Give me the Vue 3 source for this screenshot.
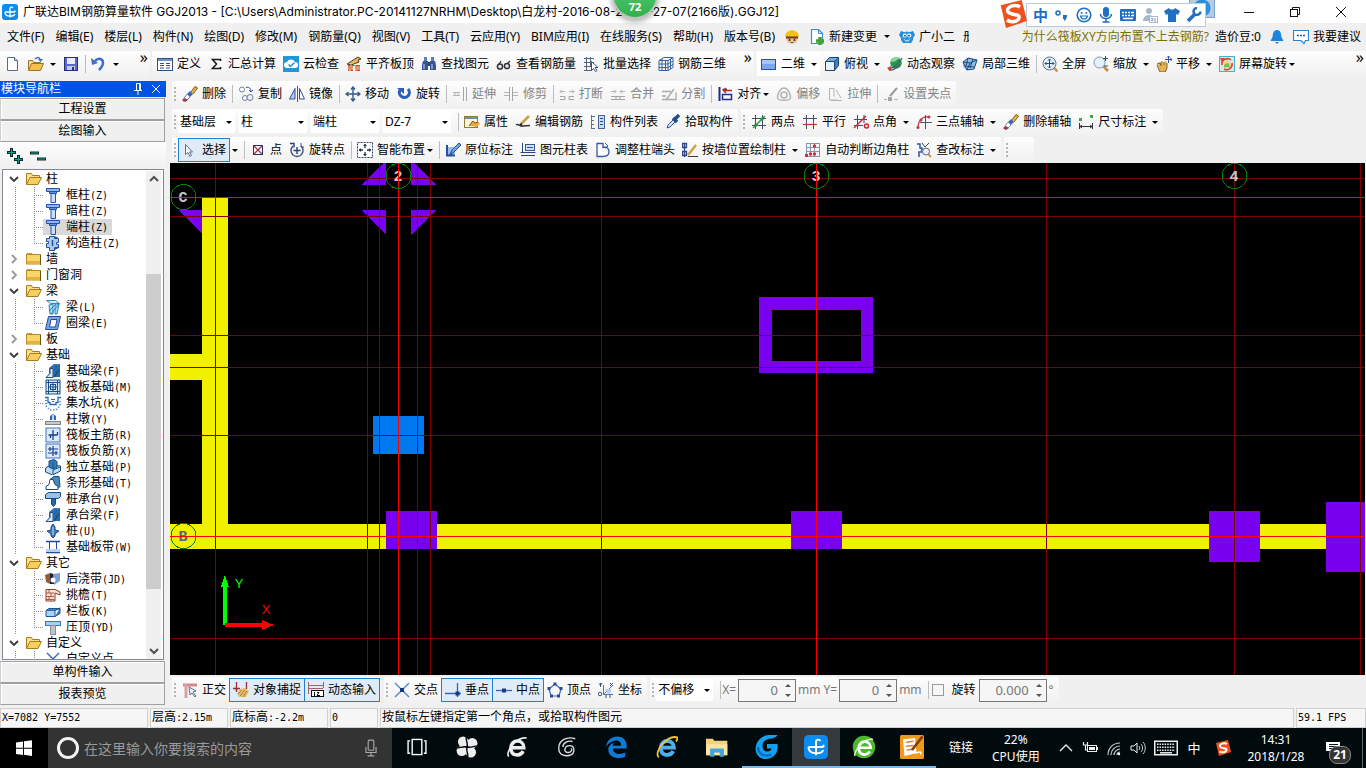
<script setup>
import { h, ref } from 'vue'

const s = (d, c = '#24448c', w = 1, f = 'none') => `<path d="${d}" stroke="${c}" stroke-width="${w}" fill="${f}"/>`
const f = (d, c) => `<path d="${d}" fill="${c}"/>`
const r = (x, y, w, ht, c, st = 'none') => `<rect x="${x}" y="${y}" width="${w}" height="${ht}" fill="${c}" stroke="${st}"/>`
const o = (x, y, rad, c, st = 'none', w = 1) => `<circle cx="${x}" cy="${y}" r="${rad}" fill="${c}" stroke="${st}" stroke-width="${w}"/>`

const grey = '#b4b4b4'
const brush = f('M8 7L13 0l3 2-5 6z', '#e8b44c') + s('M8 7L13 .5 15.500 2 11 8', '#8a5a1c') + f('M5 8l3-3 3 3-3 3z', '#3d67b8') + f('M5 8l3 3-3 3-4 1 1-3z', '#fff') + s('M5 8l3 3-3 3-4 1 1-3z', '#7a8cb0') + f('M0 14l3-2 3 2-3 2z', '#a03a4a')
const magnifier = s('M10 10l5 5', '#c98a3c', 2.5) + o(6.5, 6.5, 5.5, '#e4f0fb', '#8193ad')
const folderShut = f('M1 2h5l1 2H1z', '#c79a34') + r(.5, 3.500, 14, 9.500, '#f8d568', '#b88a2a') + r(1, 10, 13, 3, '#e5b03c') + r(14, 4, 1, 10, '#6e5218')
const folderOpen = s('M.5 13V2.500h5l1 2h7V7', '#a57c22', 1, '#fbe08a') + s('M.5 13.500L4 6.500h11.500L12 13.500z', '#a57c22', 1, '#f8cf5c')
const footing = f('M1 15l3-4V5l5-4h3v13z', '#2f6fb4') + s('M1 14.500l4-4v-5h3v9z', '#1d4f86', 1, '#dbeafc') + f('M8 6l5-5h2v13H8z', '#246aa8') + s('M9 14l5-7', '#0f3d70')
const column = s('M1.500 1.500h13v3h-13z', '#2a50a4', 1, '#8bb8ee') + s('M4.500 4.500h7v2h-7z', '#2a50a4', 1, '#5e92dc') + s('M6 6.500h4.500v9H6z', '#2a50a4', 1, '#c6defa')

const icons = {
  app: `<rect width="16" height="16" rx="3" fill="#0b8cf0"/>` + s('M8 13.500V4.500C8 3 10 2.500 11 4M3 8h10M13 8v-1.500M3 8c0 3 2 4.200 5 4.200s4.500-1 4.800-2.200', '#fff', 1.3),
  newFile: s('M2.500 1.500h7l3 3v10h-10z', '#5a6c84', 1, '#fff') + s('M9.500 1.500v3h3', '#5a6c84', 1, '#cfdcee'),
  open: s('M.5 13.500V4.500h4l1 2h7V8', '#9a7428', 1, '#f9dc86') + s('M.5 14.500L3.500 7.500h12L12.500 14.500z', '#9a7428', 1, '#f4c04e') + s('M7 3c2-2 4-2 5 0', '#3f6fb4', 1.3) + f('M10 3h5l-2.500 3z', '#3f6fb4'),
  save: r(1.5, 1.500, 13, 13, '#5a6ad0', '#27307c') + r(4, 2, 8, 6, '#e6ecfa') + r(4, 10, 8, 4, '#c2cdec') + r(9, 11, 2, 3, '#2b3482'),
  undo: s('M4 5c4-4 8-2 8 2 0 3-2 5-4 7', '#3f6ec6', 2.5) + f('M0 2l1 7 6-2z', '#3f6ec6'),
  define: r(0.5, 2.500, 15, 12, '#fff', '#2f4f84') + r(1, 3, 14, 2, '#6e90c4') + s('M3 7.500h4M3 9.500h4M3 12h4M9 7.500h4M9 9.500h4M9 12h4', '#2f4f84'),
  sigma: s('M12.500 5V3.500H4.500L8.500 8l-4 4.500h8V11', '#1a1a1a', 1.6),
  cloudCheck: r(0, 0, 16, 16, '#1f97d8') + f('M4 12a3 3 0 0 1 0-6 4.500 4.500 0 0 1 8 0 3 3 0 0 1 0 6z', '#fff') + s('M5.500 8.500l2 2 4-4', '#1f97d8', 1.5),
  slab: f('M2 8L12 1l3 2-3 1 2 2-8 2z', '#e8b860') + s('M1 8L12 1l3 2-3 1 1 2-8 3z', '#4a3414') + r(2, 9, 12, 6, '#c4532c') + s('M2 11h12M2 13h12M5 9v2M9 9v2M12 11v2M7 11v2M4 13v2M10 13v2', '#f0c49c') + s('M8 10v6', '#fff', 2),
  binoculars: f('M2 5h5v9H1V9zM9 5h5l1 4v5H9z', '#35568e') + r(3, 1, 3, 4, '#5e80ba') + r(10, 1, 3, 4, '#5e80ba') + r(7, 6, 2, 4, '#223f72') + s('M3 8v5M11 8v5', '#c6d7f0'),
  glasses: s('M2 10L5 5M10 9l4-4', '#333', 1.3) + o(4, 10.5, 2.6, '#dfe6ee', '#333', 1.5) + o(11, 10, 2.6, '#dfe6ee', '#333', 1.5),
  batch: s('M1 2.500h10M1 6.500h10M1 10.500h7M1 14.500h8M3.500 1v14M7.500 1v9', '#56657c') + s('M8.500 5.500v9l2-2 2 3 1.500-1-2-3h3z', '#3d567e', 1, '#fff'),
  rebar3d: s('M1 4.500l5-3h9v10l-5 3H1zM1 4.500h9v10M10 4.500l5-3M4 3v11M7.500 4v11M1 8h9l5-3M1 11.500h9l5-3M12.500 3v10', '#3a6296'),
  plane: r(0.5, 3.500, 14, 10, '#7ea6ec', '#2650b0') + r(1, 4, 13, 4, '#a8c5f7'),
  cube: s('M1.500 5.500l4-4h9v8l-4 5h-9z', '#1e466e', 1, '#3f82b8') + s('M1.500 5.500h9v9h-9z', '#1e466e', 1, '#e6f1fb') + s('M10.500 5.500l4-4', '#1e466e') + f('M2 5l4-3h8l-4 3z', '#73aadb'),
  orbit: o(9, 7, 5.8, '#2b9a4e') + f('M4 6c1-5 7-6 10-4-4 0-4 4-10 4z', '#8cd9a0') + s('M1 13c4 0 11-5 14-11M2 14c3 1 8-2 11-6', '#44586e', 1.2) + f('M0 12l4-2v5z', '#d04038'),
  local3d: f('M1 6l5-4 9 2-3 9-7 1-4-3z', '#8fc0e4') + s('M1 6l7 1 7-3M8 7l-3 7M1 6l4 8M6 2l-2 8M11 3l-3 9M3 10l9 1M1 6l5-4 9 2-3 9-7 1', '#1d4b7a'),
  fit: s('M11.500 11.500l4 4', '#cf9448', 2.5) + o(7.5, 7.5, 6.5, '#e8f2fc', '#5a6d88') + s('M7.500 3v9M3 7.500h9M6 4.500l1.500-1.500L9 4.500M6 10.500l1.500 1.500L9 10.500M4.500 6L3 7.500 4.500 9M10.500 6L12 7.500 10.500 9', '#1d4c9a'),
  zoom: magnifier + s('M12.500 0v5M10 2.500h5M11 10h4', '#2b4e86'),
  pan: f('M1 8l3-2 1 3V5h2l1 3 1-3 2 1v6l-1 4H4z', '#e3b35c') + s('M1 8l3-1 1 3M5 9V6M8 9V6M11 7v5l-2 4H4L1 9', '#8c6420') + s('M12.500 0v7M9 3.500h7M11 1.500L12.500 0 14 1.500M14.500 2L16 3.500 14.500 5', '#34599a'),
  screenRotate: r(0.5, .5, 15, 15, '#cdeee4', '#46b4c8') + f('M5 7l3-3 4 4-1 4H5z', '#f0d070') + f('M5 9l4-2 2 4H5z', '#6bbf6c') + s('M3 9A5.500 5.500 0 0 1 12 4M13 7a5.500 5.500 0 0 1-8 6', '#e04438', 1.6) + f('M1 2h5L3 7z', '#e04438'),
  eraser: brush,
  copy: o(4, 3.5, 2.5, '#fff', '#6b7d98') + o(7, 12, 2.500, '#fff', '#6b7d98') + o(12, 11.500, 3, '#eef', '#6b7d98') + s('M8 1.500c3-1 5 1 5 4M11 4l2 2 2-2', '#2f55a0'),
  mirror: s('M6 2.500v10.500H.500z', '#2e4f94', 1, '#b7ccf0') + s('M10.500 2.500v10.500H15.500z', '#2e4f94', 1, '#fff') + s('M8.500 0v16', '#555'),
  move: s('M8 1v14M1 8h14M6 3.500L8 1l2 2.500M6 12.500L8 15l2-2.500M3.500 6L1 8l2.500 2M12.500 6L15 8l-2.500 2', '#35598c', 1.4),
  rotate: s('M4 4a5 5 0 1 0 8-1', '#2c5fb8', 3) + f('M1 2h7v6z', '#2c5fb8'),
  extend: s('M1 6.500h7M1 9.500h7M3 6v4M6 6v4', grey) + s('M11.500 1v14M14.500 1v14', '#a4a4a4', 1),
  trim: s('M1 6.500h5M1 9.500h5M10 6.500h5M10 9.500h5', grey) + s('M6.500 1v14M9.500 1v14', '#a4a4a4', 1),
  break: s('M1 5.500h5M10 5.500h5M3 3.500L1 5.500l2 2M13 3.500l2 2-2 2', grey) + s('M1 10.500h5v3H1M15 10.500h-5v3h5', '#a4a4a4'),
  merge: s('M1 5.500h5M10 5.500h5M4 3.500l2 2-2 2M12 3.500l-2 2 2 2', grey) + s('M1 10.500h14M1 13.500h14M6 11v2M10 11v2', '#a4a4a4'),
  split: s('M1 5.500h9M1 13.500h14v-7M5 14l8-11M1 10h4', '#aaa', 1.3),
  align: s('M2.500 1v14', '#1c2c88', 2) + s('M5.500 3.500H10M5.500 13.500h9v-5h-9z', '#20328e', 1.5) + s('M15 4.500H7M9 2L6.500 4.500 9 7', '#c4222c', 1.5),
  offset: o(8, 9, 3, 'none', grey, 1.5) + s('M8 2c4 0 7 7 6.500 10S2 15 1.500 12 4 2 8 2z', grey, 1.5),
  stretch: s('M2.500 2v12h8M2.500 2.500H7v8M9 4l5 8', grey) + s('M4 14.500h11', grey, 1),
  clampPoint: s('M7 10l7-8', '#9c9c9c', 2) + s('M1 13.500h3M11 13.500h4', grey) + r(5, 11, 4, 4, '#a6a6a6'),
  props: r(0.500, 2.500, 13, 11, '#fdf4d4', '#8f7a40') + r(1, 3, 12, 2, '#6e8cc0') + f('M5 12l3-5 3 2 3-2 2 3-4 3-4-1z', '#eaa93c') + s('M5 12l4-5 2 2 3-1', '#7c5a18'),
  editRebar: s('M1 11c3-2 4 2 7 1l7-.500', '#333', 1.5) + s('M6 10l8-8', '#caa04c', 2.500) + s('M5 11l2-1', '#222', 2),
  list: s('M1 2.500h4M1 6.500h3M1 10.500h3M1 14.500h4', '#56739f', 1) + s('M1.500 1v14', '#56739f') + r(8.500, 1.500, 6, 13, '#c8daf4', '#44638f') + s('M10 4.500h3M10 7.500h3M10 10.500h3', '#2c4c80'),
  picker: s('M2 14l1-3 6-6 2 2-6 6z', '#33588e', 1, '#cfe3fa') + s('M8 4l4 4M10 5l4-4', '#1f4c98', 3.5),
  twoPoint: s('M4.500 1v14M11.500 1v14M1 4.500h14M1 11.500h14', '#424c66') + s('M2 14L14 2', '#2d9244', 1.3) + o(5, 11, 1.800, '#2d9244') + o(11, 5, 1.800, '#2d9244'),
  parallel: s('M4.500 1v14M11.500 1v14', '#40506e') + s('M1 4.500h14', '#40506e') + s('M1 10.500h14', '#c43838', 1.3),
  angle: s('M4.500 1v14M11 1v8M1 5.500h13M1 11.500h9', '#424c66') + s('M1 14L13 2', '#c42e38', 1.5) + o(13.500, 12, 2, 'none', '#d02430', 1.5),
  threePoint: s('M2 14C2 6 7 2 13 3', '#c43840', 1.3) + s('M9.500 1v14M4 8.500h12', '#44597e') + o(2, 13.500, 1.500, '#c43840') + o(13, 3, 1.500, '#c43840') + o(5, 6, 1.500, '#c43840'),
  dimension: s('M1.500 9v6M14.500 9v6M1 12.500h14M4 11l-2 1.500L4 14M12 11l2 1.500-2 1.500', '#333') + r(1, 4, 3, 3, '#42a848') + r(12, 1, 3, 3, '#42a848'),
  pointer: s('M3.500 2.500v10l2.500-2 2 4 1.500-1-2-3.500h3z', '#5b6b84', 1, '#fff'),
  point: r(3.500, 3.500, 9, 9, '#fff', '#26356e') + s('M4 4l8 8M12 4l-8 8', '#a2324e', 1.3),
  rotatePoint: s('M4 4a6 6 0 1 0 8 0', '#3c557e', 1.4) + s('M1 1.500h4v4', '#26427e', 1.4) + s('M8 5v7M4.500 8.500h7', '#26427e', 1.4) + s('M12 1v4h3', '#3c557e'),
  smart: `<rect x=".5" y=".5" width="15" height="15" fill="#fff" stroke="#2f4264" stroke-dasharray="2 1"/>` + s('M8 2v4M8 10v4M2 8h4M10 8h4', '#20355e', 1.3) + f('M6 4l2-2 2 2zM6 12l2 2 2-2zM4 6L2 8l2 2zM12 6l2 2-2 2z', '#20355e'),
  mark: r(1, 5, 9, 8, '#9bbcec') + s('M1 13.500h9M2 3v11M5 13L14 2', '#27509c', 2) + s('M5 13l2-5 7-7 2 2-7 7z', '#27509c', 1, '#79a3e6'),
  colTable: s('M2.500 1v9M.500 10.500h15M1 13.500h14', '#2c4680') + r(5.500, 2.500, 9, 6, '#cfdff6', '#3a5488') + s('M7 5.500h6', '#3a5488'),
  adjust: s('M2 1.500h6v4c4-1 6 1 6 4s-2 5-6 5H2z', '#3758a6', 1.300, '#fff') + s('M10 1l3 3-3 2', '#3758a6'),
  wallCol: s('M2.500 1v14M.500 1.500h4v4h-4zM.500 9.500h4v4h-4z', '#2f4786', 1.300, '#dfe9f8') + s('M6 13l8-10', '#d0a048', 2.500) + s('M6 14.500h10', '#3a3a3a'),
  autoCorner: s('M1.500 1v14M5.500 1v14M9.500 1v14M14.500 1v14M1 1.500h14M1 5.500h14M1 9.500h14M1 14.500h14', '#8394ad') + o(5.5, 12, 1.700, '#d22f3a') + o(9.500, 4, 1.700, '#d22f3a') + o(9.500, 12, 1.700, '#d22f3a') + r(0, 12, 3, 3, '#d22f3a'),
  checkMark: s('M1 2h3v4h2v4H3v5', '#2c55b0', 1.500) + s('M6 1l3 4M13 1L9 5', '#444') + s('M12 12l3 3', '#cf9448', 2) + o(10, 9.500, 3.500, '#e4f0fb', '#667'),
  ortho: s('M1 3h14', '#d9868a', 3) + s('M4 2v14', '#d9a0a2', 3) + s('M7 5l1 8 2-2 3 4 1-1-3-4 3-1z', '#5b7488', 1, '#e6eef4'),
  snap: f('M4 12l3-5 5-1 4 3-3 6H6z', '#e7c067') + s('M5 12l4-4M7 14l5-6M10 15l4-6', '#a57a2c') + s('M3.500 0v10M13.500 0v7M0 6.500h7', '#9a3034', 1.3) + f('M2 6h3l-1.500 4z', '#9a3034'),
  dynInput: s('M.500 0v12M15.500 0v6M1 3.500h14M1 6.500h14', '#ae5c60') + r(3.500, 8.500, 12, 6, '#fff', '#111') + s('M6.500 10v4M9 10.500h2l-2 3h3', '#111'),
  cross: s('M1 1l14 14M15 1L1 15', '#4c84d0', 1.300) + r(6, 6, 4, 4, '#16388c'),
  perp: s('M12.500 1v14M0 11.500h16', '#3468bc', 1.300) + r(10.500, 9.500, 4, 4, '#16388c'),
  mid: s('M0 8.500h16', '#3468bc', 1.300) + r(6, 6.500, 4, 4, '#16388c'),
  vertex: s('M8 2l6 5-2 7H4L2 7z', '#3468bc', 1.2) + r(6.500, .500, 3, 3, '#2c4a90') + r(12.500, 5, 3, 3, '#2c4a90') + r(.500, 5, 3, 3, '#2c4a90') + r(3, 12.500, 3, 3, '#2c4a90') + r(10, 12.500, 3, 3, '#2c4a90'),
  coord: s('M5.500 3v9.500H15M6 12L14 4', '#4478b8') + s('M2.500 1v4M1 1.500l1.500 2L4 1M12 1l3 3M15 1l-3 3M8 13v3M12 13v3', '#3a4f80') + o(2, 12, 1.800, 'none', '#3a4f80') + f('M7 7h6v3l-3 2z', '#b5cdf0'),
  worker: o(8, 9, 6, '#eec29a') + f('M1 8C1-1 15-1 15 8z', '#f4c01e') + s('M2 8.500h12', '#6b3a1c', 2) + o(5.500, 11, 1, '#3b2418') + o(10.500, 11, 1, '#3b2418') + s('M6.500 13.500h3', '#a04830'),
  change: s('M2.500 .500h7l4 4v10h-11z', '#3d8fcf', 1.200, '#fff') + s('M9.500 .500v4h4', '#3d8fcf') + s('M11 8v8M7 12h8', '#44a52c', 3.500),
  mascot: f('M0 6l2-4 3 1h6l3-1 2 4-2 3v2l-2 3H4l-2-3V9z', '#1f8bd8') + o(8, 8, 5.5, '#2a98e4') + o(5.700, 6.500, 2, '#fff') + o(10.300, 6.500, 2, '#fff') + o(6, 6.700, .900, '#0b3e70') + o(10, 6.700, .900, '#0b3e70') + s('M5.500 10.500c1 2 4 2 5 0', '#fff'),
  bell: f('M8 1c4 0 4 4 4.500 7l2 4h-13l2-4C4 5 4 1 8 1zM6 13h4l-2 2z', '#1a84e0'),
  bubble: s('M.500 1.500h15v10h-3l-1.500 3-3-3h-7.500z', '#2a84c8', 1.200, '#fff') + s('M4 6.500h2M7 6.500h2M10 6.500h2', '#2a5488', 1.500),
  smile: o(8, 8, 6.800, '#fff', '#1f6fc4', 1.600) + o(5.600, 6, 1, '#1f6fc4') + o(10.400, 6, 1, '#1f6fc4') + s('M4.500 9c1 4 6 4 7 0z', '#1f6fc4', 1.200),
  comma: o(4, 6, 2, '#fff', '#1f6fc4', 1.500) + f('M9 8h4c0 3-1 5-3 6v-2H9z', '#1f6fc4'),
  mic: `<rect x="5" y="0" width="6" height="10" rx="3" fill="#1f6fc4"/>` + s('M2.500 7c0 6 11 6 11 0M8 11.500V15M4.500 15h7', '#1f6fc4', 1.600),
  keys: `<rect x="0" y="2" width="16" height="12" rx="1" fill="#1f6fc4"/>` + s('M2 5.500h2M5 5.500h2M8 5.500h2M11 5.500h3M2 8.500h2M5 8.500h2M8 8.500h2M11 8.500h3M3 11.500h10', '#fff', 1.500),
  user: o(7, 4, 3, '#a8b8cc') + f('M1 14c0-8 12-8 12 0z', '#a8b8cc') + r(7.500, 9.500, 8, 6, '#fff', '#a8b8cc') + s('M9 11.500h2v2H9M13 11v4', '#8d9fb8'),
  shirt: f('M5 1c1 2 5 2 6 0l5 3-2 4-2-1v8H4V7L2 8 0 4z', '#1f6fc4'),
  wrench: s('M2 14l7-7', '#1f6fc4', 3.500) + s('M14.500 4.500a3.500 3.500 0 1 1-3.500-3.500', '#1f6fc4', 2.500),
  sogou: f('M1 3L13 0l3 12-12 4z', '#f0501c') + s('M12 4C9 2 4 4 5 6.500s7 1 6.500 3.500S7 13 4.500 11.500', '#fff', 2),
  folderShut,
  folderOpen,
  column,
  tie: s('M4.500 1.500h5v2h4v4h-2v2h2v3h-4v3h-5v-3h-3v-4h2v-2h-2v-3h3z', '#2a4f94', 1, '#a9cbf2') + s('M9.500 2l3 1M10 14l4-2M7.500 5v6', '#2a4f94', 1.500),
  beam: s('M1.500 1.500l4 3h9l-4-3z', '#2c86bc', 1, '#d4effc') + s('M4 6l4-1v10H5zM10 5l4 0-2 10h-2z', '#2c86bc', 1, '#a4daf4') + s('M4 12l8-8M6 15l8-10', '#2c86bc'),
  ring: s('M3.500 1.500h12l-3 13H.500z', '#23499c', 1, '#7ba5e8') + s('M6 4.500h6l-1.500 7.500H4.500z', '#23499c', 1, '#fff'),
  footing,
  raft: r(1, 1, 14, 14, '#d7e8fb', '#194f86') + s('M3.500 1v14M12.500 1v14M1 3.500h14M1 12.500h14M8 4v8M4 8h8', '#194f86', 1) + r(5.500, 5.500, 5, 5, 'none', '#194f86'),
  pit: s('M0 2.500h3v5h2v2h6v-2h2v-5h3', '#2a6ab4', 1.300) + `<path d="M1 5v6l4 4h6l4-4V5" fill="none" stroke="#4680c4" stroke-width="2" stroke-dasharray="1 2"/>` + s('M6 4.500h4M7 6.500h2', '#2a6ab4'),
  pier: f('M5 9V5l3-2 3 2v4z', '#3666b0') + r(7, 4, 2, 5, '#b9d4f5') + r(.500, 10.500, 15, 3, '#c6c9d0', '#80848e'),
  raftMain: r(1, 1, 14, 14, '#dce9fb', '#4672b8') + s('M8 3v10M3.500 8h9M5.500 8v3M12.500 5v3', '#173f8c', 1.300),
  raftNeg: r(1, 1, 14, 14, '#dce9fb', '#4672b8') + s('M8 3v10M3 6h10M3 10h10M5 4v4M11 8v4', '#173f8c', 1.200),
  pad: s('M.500 9l5-3 10 1v5l-8 4-7-3z', '#194c80', 1, '#b7d9f4') + s('M4 8V2l5-1.500 3 2V8l-4 2z', '#194c80', 1, '#367cb8') + s('M8 3v7M8 15v-4l7-3', '#194c80'),
  strip: s('M5 4.500l4-3h5l1 10-2 2', '#174a80', 1, '#4a87c0') + s('M1 14.500v-3l3-2 1-5h3l2 5 3 2v3z', '#174a80', 1, '#fff'),
  cap: s('M.500 3.500l3-2h12v4l-2 2H.500z', '#174a80', 1, '#95c2ee') + s('M6.500 8h4v5l-2 2.500-2-2z', '#174a80', 1, '#286cac'),
  pile: s('M8 1l2 3v3l4 1-4 3v2l-2 2-2-2v-2L2 8l4-1V4z', '#174a80', 1, '#3b7dbe') + s('M8 4v8', '#cfe6fb'),
  band: s('M1 2.500h14M1 13.500h14', '#23499c', 1.500) + s('M4.500 3v10M11.500 3v10', '#23499c') + r(1, 10, 14, 3, '#b7cff0'),
  pour: f('M0 4l5-2v11l-4-2z', '#9a5a34') + f('M5 2l4 1v10l-4 0z', '#1a2440') + f('M8 3l7-1v8l-6 4z', '#7ea0d0') + o(8, 9, 2.500, '#fff'),
  eave: s('M1 2.500h9l5 2.500v3l-5-2v8H1z', '#8c3b20', 1, '#f7e3d8') + s('M1 6h8M1 9.500h8M1 12.500h8M4 3v3M6 6v3M4 10v3', '#b0583a'),
  rail: s('M1 7.500h9v6H1z', '#1d558c', 1, '#a8d1f4') + s('M1 7.500l3-2h11l-5 2M10 13.500l5-3v-6', '#1d558c', 1, '#3f85c0'),
  coping: r(.500, 2.500, 15, 4, '#a7cdf5', '#3f78bc') + r(5.500, 6.500, 5, 9, '#c0c4ca', '#888d96'),
  xpoint: s('M2 2l12 12M14 2L2 14', '#2f62c4', 1.400),
  winlogo: f('M0 2.500l7-1v6.300H0zM8 1.300L16 .200v7.600H8zM0 8.700h7V15l-7-1zM8 8.700h8V16l-8-1.200z', '#fff'),
  taskview: r(4.500, 2.500, 7, 11, 'none', '#fff') + s('M3 3.500H1.500v9H3M13 3.500h1.500v9H13', '#fff'),
  fan: o(5.200, 4.200, 3.800, '#eee') + o(11.800, 5.200, 3.800, '#eee') + o(10.800, 11.800, 3.800, '#eee') + o(4.200, 10.800, 3.800, '#eee') + s('M8 8C9 4 6 2 8 0M8 8c4 1 6-2 8 0M8 8c-1 4 2 6 0 8M8 8c-4-1-6 2-8 0', '#04090b', 1),
  ieWhite: s('M3.500 8.500h9.500C13 2 3.500 2 3.500 8.500s7 6.500 9 2.500', '#eee', 2.500) + s('M2 15C-1 12 8 0 15 1.500', '#eee', 1.200),
  swirl: s('M14 2C8 0 2 3 2 9c0 5 5 6 8 5 4-1 4-7 0-7-4 0-5 5-1 5 2 0 3-2 2-3M12 4C9 3 5 5 5 8', '#ddd', 1),
  edge: f('M0 8C1-2 15-2 15 7v2H5c0 4 5 5 9 3v3C7 18 0 14 2 8c1-2 3-3 4-3-1 1-1 1-1 2h6C11 1 3 3 0 8z', '#0d7bd8'),
  ie: s('M3.500 8.500h9.500C13 2 3.500 2 3.500 8.500s7 6.500 9 2.500', '#4cb0ee', 2.800) + s('M2 15.500C-2 12 8-1 15.500 1c0 1 0 2-1 3', '#f2c53a', 1.300),
  explorer: f('M0 2h5l1 1.500h9.500V14H0z', '#f5d277') + r(0, 6, 15.500, 8, '#fbe5a0') + f('M3 9h10v6h-3v-3H6v3H3z', '#3ea6dd'),
  glodon: f('M15 0C13 3 10 2 8 3 4 4 4 11 8 11c2 0 3-1 3-2H8V6h7c1 6-3 10-8 10S-1 11 1 6 8-1 15 0z', '#14a0f0') + s('M2 8c0 5 5 7 9 5', '#0767c8', 1.500),
  green: o(8, 8, 7.500, '#4cb82c') + s('M4 8.500h8.500C12 3 4.500 3 4.500 8.500s5 5.500 7.500 2.500', '#fff', 1.800) + s('M2 14C1 11 8 2 14 3', '#e8ffe0', 1),
  notes: `<rect x="0" y="0" width="16" height="16" rx="1" fill="#f09a18"/>` + f('M2 3l8-1 1 10-8 2z', '#fff') + s('M4 5l5-1M4 7.500l5-.500M4.500 10l4-.500', '#d4823c') + s('M15 1L8 10', '#7c3f14', 1.800) + s('M10 12c3 0 4-2 4 1', '#fff'),
  up: s('M2 11l6-6 6 6', '#eee', 1.300),
  battery: r(5.500, 5.500, 9, 6, 'none', '#eee') + r(7, 7, 6, 3, '#eee') + r(15, 7, 1, 3, '#eee') + s('M1.500 2v3h4V2M3.500 5v5H5', '#eee', 1.200),
  wifi: s('M2 15C2 8 7 3 14 3M5 15c0-5 4-9 9-9M8 15c0-3 3-6 6-6M11 15c0-2 1-3 3-3', '#ccc', 1.200) + o(13, 14, 1.200, '#fff'),
  volume: s('M1 6h3l3-3v10l-3-3H1z', '#eee') + s('M9 6c1 1 1 3 0 4M11 4c2 2 2 6 0 8M13 2c3 3 3 9 0 12', '#ccc'),
  keyboard: r(.500, 3.500, 15, 9, 'none', '#eee') + `<path d="M2 5.500h12M2 7.500h12M2 9.500h12" stroke="#eee" stroke-dasharray="1 .7"/>` + s('M4 11.200h8', '#eee'),
  note: f('M1 2h14v9H8l-3 3v-3H1z', '#fff') + s('M4 4.500h9M4 6.500h9M4 8.500h6', '#111'),
  micOutline: `<rect x="5.500" y="1" width="5" height="9" rx="1" fill="none" stroke="#aaa"/>` + s('M3.500 7v5h9V7M8 12v3M5 15h6', '#aaa'),
  min: s('M3 8.500h10', '#111'),
  restore: r(3.500, 5.500, 7, 7, '#fff', '#111') + s('M5.500 5V3.500h7v7H11', '#111'),
  close: s('M3 3l10 10M13 3L3 13', '#111'),
  pin: s('M4 9.500h8M6.500 9V2.500h4V9M9.500 2v7M8 10v4', '#fff'),
  closeWhite: s('M4 4l8 8M12 4l-8 8', '#fff'),
  expandAll: s('M4.500 0v9M0 4.500h9M11.500 7v9M7 11.500h9', '#0c2c2c', 3) + s('M4.500 1v7M1 4.500h7M11.500 8v7M8 11.500h7', '#1a9a90', 1),
  collapseAll: s('M0 5h9M7 11h9', '#0c2c2c', 3) + s('M1 5h7M8 11h7', '#1a9a90', 1),
  down: s('M4 6l4 4 4-4', '#3a3a3a', 1.800),
  right: s('M6 4l4 4-4 4', '#9a9a9a', 1.800),
  scrollUp: s('M4 10l4-4 4 4', '#505050', 2),
  scrollDown: s('M4 6l4 4 4-4', '#505050', 2)
}

const Icon = (p) => h('svg', { viewBox: '0 0 16 16', 'aria-hidden': 'true', class: 'icon', innerHTML: icons[p.name] })
Icon.props = ['name']

// Toolbar entries: [icon, label, option]; option is split | menu | off | on
const drawers = {
  grip: () => h('span', { class: 'grip' }),
  sep: () => h('span', { class: 'sep' }),
  more: () => h('button', { class: 'more', 'aria-label': '更多' }, '»'),
  combo: ([, value, size, label]) =>
    h('label', { class: ['combo', size] }, [h('select', { 'aria-label': label }, [h('option', value)])]),
  check: ([, text]) => h('label', { class: 'check' }, [h('input', { type: 'checkbox' }), h('span', text)]),
  num: ([, label, value, unit, size]) =>
    h('label', { class: ['num', size] }, [
      label ? h('span', label) : null,
      h('span', { class: 'spin' }, [h('input', { type: 'text', value, 'aria-label': label || '旋转角度' }), h('i', { class: 'arrows' })]),
      h('span', unit)
    ])
}

const ToolBar = (p) =>
  h('div', { class: 'bar', role: 'toolbar' }, p.items.flatMap((it) => {
    if (drawers[it[0]]) return [drawers[it[0]](it)]
    const [icon, text, opt = ''] = it
    const tool = h('button', { class: ['tool', opt], disabled: opt === 'off', 'aria-label': text || icon }, [
      h(Icon, { name: icon }),
      text ? h('span', text) : null,
      opt === 'menu' ? h('i', { class: 'tri' }) : null
    ])
    return opt.includes('split') ? [tool, h('button', { class: 'drop', 'aria-label': '展开' }, [h('i', { class: 'tri' })])] : [tool]
  }))
ToolBar.props = ['items']

const menus = ['文件(F)', '编辑(E)', '楼层(L)', '构件(N)', '绘图(D)', '修改(M)', '钢筋量(Q)', '视图(V)', '工具(T)', '云应用(Y)', 'BIM应用(I)', '在线服务(S)', '帮助(H)', '版本号(B)']

const topBars = [
  [['newFile', ''], ['open', '', 'split'], ['save', ''], ['sep'], ['undo', '', 'split'], ['more']],
  [['define', '定义'], ['sigma', '汇总计算'], ['cloudCheck', '云检查'], ['slab', '平齐板顶'], ['binoculars', '查找图元'], ['glasses', '查看钢筋量'], ['batch', '批量选择'], ['rebar3d', '钢筋三维'], ['more']],
  [['plane', '二维', 'split lit'], ['cube', '俯视', 'split'], ['orbit', '动态观察'], ['local3d', '局部三维'], ['sep'], ['fit', '全屏'], ['zoom', '缩放', 'split'], ['pan', '平移', 'split'], ['screenRotate', '屏幕旋转', 'menu'], ['more']]
]

const rows = [
  [[['grip'], ['eraser', '删除'], ['sep'], ['copy', '复制'], ['mirror', '镜像'], ['sep'], ['move', '移动'], ['rotate', '旋转'], ['sep'], ['extend', '延伸', 'off'], ['trim', '修剪', 'off'], ['sep'], ['break', '打断', 'off'], ['merge', '合并', 'off'], ['split', '分割', 'off'], ['sep'], ['align', '对齐', 'menu'], ['offset', '偏移', 'off'], ['stretch', '拉伸', 'off'], ['sep'], ['clampPoint', '设置夹点', 'off']]],
  [
    [['grip'], ['combo', '基础层', 'short', '楼层'], ['combo', '柱', 'long', '构件类型'], ['combo', '端柱', 'long', '构件子类型'], ['combo', 'DZ-7', 'long', '构件名称'], ['sep'], ['props', '属性'], ['editRebar', '编辑钢筋'], ['list', '构件列表'], ['picker', '拾取构件']],
    [['grip'], ['twoPoint', '两点'], ['parallel', '平行'], ['angle', '点角', 'split'], ['threePoint', '三点辅轴', 'split'], ['eraser', '删除辅轴'], ['dimension', '尺寸标注', 'split']]
  ],
  [
    [['grip'], ['pointer', '选择', 'on split'], ['sep'], ['point', '点'], ['rotatePoint', '旋转点'], ['sep'], ['smart', '智能布置', 'menu'], ['sep'], ['mark', '原位标注'], ['colTable', '图元柱表'], ['adjust', '调整柱端头'], ['wallCol', '按墙位置绘制柱', 'split'], ['autoCorner', '自动判断边角柱'], ['checkMark', '查改标注', 'split']],
    [['grip']]
  ]
]

const snapBars = [
  [['grip'], ['ortho', '正交'], ['snap', '对象捕捉', 'on'], ['dynInput', '动态输入', 'on']],
  [['grip'], ['cross', '交点'], ['perp', '垂点', 'on'], ['mid', '中点', 'on'], ['vertex', '顶点'], ['coord', '坐标']],
  [['grip'], ['combo', '不偏移', 'short', '偏移方式'], ['sep'], ['num', 'X=', '0', 'mm', ''], ['num', 'Y=', '0', 'mm', ''], ['sep'], ['check', '旋转'], ['num', '', '0.000', '°', 'wide']]
]

const tree = [
  { t: '柱', open: true, kids: [['column', '框柱', '(Z)'], ['column', '暗柱', '(Z)'], ['column', '端柱', '(Z)'], ['tie', '构造柱', '(Z)']] },
  { t: '墙', kids: [] },
  { t: '门窗洞', kids: [] },
  { t: '梁', open: true, kids: [['beam', '梁', '(L)'], ['ring', '圈梁', '(E)']] },
  { t: '板', kids: [] },
  { t: '基础', open: true, kids: [['footing', '基础梁', '(F)'], ['raft', '筏板基础', '(M)'], ['pit', '集水坑', '(K)'], ['pier', '柱墩', '(Y)'], ['raftMain', '筏板主筋', '(R)'], ['raftNeg', '筏板负筋', '(X)'], ['pad', '独立基础', '(P)'], ['strip', '条形基础', '(T)'], ['cap', '桩承台', '(V)'], ['footing', '承台梁', '(F)'], ['pile', '桩', '(U)'], ['band', '基础板带', '(W)']] },
  { t: '其它', open: true, kids: [['pour', '后浇带', '(JD)'], ['eave', '挑檐', '(T)'], ['rail', '栏板', '(K)'], ['coping', '压顶', '(YD)']] },
  { t: '自定义', open: true, kids: [['xpoint', '自定义点', '']] }
]
const selected = ref('端柱')

const minorX = [45, 197, 209, 247, 260, 431, 876, 1064, 1190]
const minorY = [15, 53, 172, 204, 272, 475]
const axes = [
  { x: 13, y: 34, t: 'C' },
  { x: 228, y: 13, t: '2' },
  { x: 646, y: 13, t: '3' },
  { x: 1064, y: 13, t: '4' },
  { x: 13, y: 373, t: 'B' }
]

const apps = [
  ['taskview', '任务视图', ''], ['fan', '风扇', ''], ['ieWhite', '浏览器', ''], ['swirl', '助手', ''], ['edge', 'Edge', ''], ['ie', 'Internet Explorer', ''], ['explorer', '文件资源管理器', ''], ['glodon', '广联达', 'run'],
  ['app', '广联达BIM钢筋算量软件', 'run tight active'], ['green', '安全浏览器', 'run tight'], ['notes', '画板', 'run tight']
]
</script>

<template>
  <div class="window">
    <header class="title">
      <Icon name="app" />
      <h1>广联达BIM钢筋算量软件 GGJ2013 - [C:\Users\Administrator.PC-20141127NRHM\Desktop\白龙村-2016-08-25-13-27-07(2166版).GGJ12]</h1>
      <div class="controls">
        <button aria-label="最小化"><Icon name="min" /></button>
        <button aria-label="还原"><Icon name="restore" /></button>
        <button aria-label="关闭"><Icon name="close" /></button>
      </div>
      <div class="ball">72</div>
      <div class="peek"></div>
      <div class="ime">
        <Icon name="sogou" class="logo" />
        <span>中</span>
        <Icon v-for="n in ['comma', 'smile', 'mic', 'keys', 'user', 'shirt', 'wrench']" :key="n" :name="n" />
      </div>
    </header>

    <nav class="menu">
      <button v-for="m in menus" :key="m">{{ m }}</button>
      <button class="pic" aria-label="工友"><Icon name="worker" /></button>
      <button class="pic"><Icon name="change" />新建变更<i class="tri"></i></button>
      <button class="pic"><Icon name="mascot" />广小二</button>
      <span class="cut">册</span>
      <div class="right">
        <a href="#" class="tip">为什么筏板XY方向布置不上去钢筋?</a>
        <span>造价豆:0</span>
        <button aria-label="通知"><Icon name="bell" /></button>
        <button><Icon name="bubble" />我要建议</button>
      </div>
    </nav>

    <div class="toprow tools">
      <ToolBar v-for="(b, i) in topBars" :key="i" :items="b" :class="'top' + i" />
    </div>

    <main class="body">
      <aside class="nav">
        <div class="navhead"><span>模块导航栏</span><Icon name="pin" /><Icon name="closeWhite" /></div>
        <button class="section">工程设置</button>
        <button class="section">绘图输入</button>
        <div class="treetools">
          <button aria-label="全部展开"><Icon name="expandAll" /></button>
          <button aria-label="全部折叠"><Icon name="collapseAll" /></button>
        </div>
        <div class="treebox">
          <ul class="tree">
            <li v-for="g in tree" :key="g.t">
              <button class="branch"><Icon :name="g.open ? 'down' : 'right'" /><Icon :name="g.open ? 'folderOpen' : 'folderShut'" /><span>{{ g.t }}</span></button>
              <ul v-if="g.open">
                <li v-for="(k, i) in g.kids" :key="k[1]" class="leaf" :class="{ last: i === g.kids.length - 1 }">
                  <button :class="{ sel: selected === k[1] }" @click="selected = k[1]"><Icon :name="k[0]" /><span>{{ k[1] }}<span class="lat">{{ k[2] }}</span></span></button>
                </li>
              </ul>
            </li>
          </ul>
          <div class="scroll"><Icon name="scrollUp" /><div class="track"><div class="thumb"></div></div><Icon name="scrollDown" /></div>
        </div>
        <button class="section">单构件输入</button>
        <button class="section">报表预览</button>
      </aside>

      <section class="work">
        <div class="toolrows tools">
          <div v-for="(row, i) in rows" :key="i" class="toolrow">
            <ToolBar v-for="(b, j) in row" :key="j" :items="b" />
          </div>
        </div>

        <svg class="canvas" role="img" aria-label="绘图区" shape-rendering="crispEdges">
          <g fill="#f0f000">
            <rect x="32" y="35" width="26" height="326" />
            <rect x="0" y="191" width="32" height="26" />
            <rect x="0" y="361" width="1156" height="25" />
          </g>
          <g fill="#7a00f0">
            <rect x="216" y="348" width="51" height="38" />
            <rect x="621" y="348" width="51" height="38" />
            <rect x="1039" y="348" width="51" height="51" />
            <rect x="1156" y="339" width="39" height="70" />
            <path d="M589 134h114v76H589zM602 147v51h89v-51z" fill-rule="evenodd" />
            <path d="M191 22L213 0h3v22zM241 0h3l22 22h-25zM191 47h25v25zM241 47h25l-25 25zM8 47h24v24z" />
          </g>
          <rect x="203" y="253" width="51" height="38" fill="#0078f0" />
          <g fill="#800000">
            <rect v-for="x in minorX" :key="x" :x="x" y="0" width="1" height="100%" />
            <rect v-for="y in minorY" :key="y" x="0" :y="y" width="100%" height="1" />
          </g>
          <g class="mark">
            <text v-for="a in axes" :key="a.t" :x="a.x" :y="a.y + 5" :fill="a.t === 'B' ? '#5a58b0' : '#c8c8c8'">{{ a.t }}</text>
          </g>
          <g fill="#ff0000">
            <rect x="228" y="0" width="1" height="100%" />
            <rect x="646" y="0" width="1" height="100%" />
            <rect x="0" y="34" width="100%" height="1" />
            <rect x="0" y="373" width="100%" height="1" />
          </g>
          <circle v-for="a in axes" :key="a.t" :cx="a.x + 0.5" :cy="a.y" r="12.5" fill="none" stroke="#008000" />
          <path d="M53 462V424h-2l4-12 4 12h-2v38z" fill="#00ff00" />
          <path d="M55 460h37v-3l12 5-12 5v-3H55z" fill="#ff0000" />
          <text class="axis" x="69" y="425" fill="#00ff00">Y</text>
          <text class="axis" x="96" y="451" fill="#ff0000">X</text>
        </svg>

        <div class="toolrow tools snap">
          <ToolBar v-for="(b, i) in snapBars" :key="i" :items="b" />
        </div>
      </section>
    </main>

    <footer class="status">
      <span class="c1"><span class="lat">X=7082 Y=7552</span></span>
      <span class="c2">层高<span class="lat">:2.15m</span></span>
      <span class="c3">底标高<span class="lat">:-2.2m</span></span>
      <span class="c4"><span class="lat">0</span></span>
      <span class="hint">按鼠标左键指定第一个角点，或拾取构件图元</span>
      <span class="c5"><span class="lat">59.1 FPS</span></span>
    </footer>

    <div class="taskbar">
      <button class="start" aria-label="开始"><Icon name="winlogo" /></button>
      <label class="search"><i class="ringo"></i><input type="text" placeholder="在这里输入你要搜索的内容" aria-label="搜索" /><Icon name="micOutline" /></label>
      <button v-for="a in apps" :key="a[0]" class="app" :class="a[2]" :aria-label="a[1]"><Icon :name="a[0]" /></button>
      <a href="#" class="link">链接</a>
      <div class="cpu">22%<br />CPU使用</div>
      <div class="tray">
        <button v-for="n in ['up', 'battery', 'wifi', 'volume']" :key="n" :aria-label="n"><Icon :name="n" /></button>
        <button class="kb" aria-label="触摸键盘"><Icon name="keyboard" /></button>
        <button class="lang">中</button>
        <button class="sg" aria-label="输入法"><Icon name="sogou" /></button>
        <div class="clock">14:31<br />2018/1/28</div>
        <button class="notice" aria-label="通知 21"><Icon name="note" /><b>21</b></button>
        <i class="edge"></i>
      </div>
    </div>
  </div>
</template>

<style>
html, body { margin: 0; height: 100%; }
#app { height: 100%; }
</style>

<style scoped>
.window { display: flex; flex-direction: column; height: 100vh; min-height: 480px; overflow: hidden; background: #f0f0f0; color: #000; font: 12px/16px "Noto Sans", "Noto Sans CJK SC", sans-serif; }
button, .tools :deep(button) { font: inherit; color: inherit; background: none; border: 0; padding: 0; margin: 0; display: flex; align-items: center; white-space: nowrap; }
.icon, .tools :deep(.icon) { width: 16px; height: 16px; flex: none; display: block; }
.tri, .tools :deep(.tri) { width: 0; height: 0; border: 3px solid transparent; border-top-color: #000; border-bottom: 0; flex: none; }
ul { list-style: none; margin: 0; padding: 0; }

.title { position: relative; flex: none; display: flex; align-items: center; height: 23px; padding-left: 2px; background: #fff; }
.title h1 { font: 400 12px/16px Inter, "Noto Sans CJK SC", sans-serif; margin: 0 0 0 5px; white-space: nowrap; }
.controls { margin-left: auto; display: flex; gap: 30px; padding-right: 17px; }
.ball { position: absolute; left: 612px; top: -28px; width: 46px; height: 47px; box-sizing: border-box; border: 2px solid #b8c4b8; border-radius: 50%; background: linear-gradient(#58d078, #34b050); color: #fff; font-weight: 700; font-size: 11px; line-height: 12px; padding-top: 27px; text-align: center; box-shadow: 0 2px 6px #0006; z-index: 2; }
.peek { position: absolute; right: 151px; top: 0; width: 24px; height: 17px; border: 1px solid #7ba2cc; border-top: 0; background: radial-gradient(circle at 12px 8px, #2a90dc 8px, #b5cbe2 9px); z-index: 1; }
.ime { position: absolute; right: 160px; top: 3px; width: 180px; height: 24px; box-sizing: border-box; display: flex; align-items: center; justify-content: flex-end; gap: 6px; padding-right: 3px; background: #fff; border: 1px solid #b9cbe0; color: #1f6fc4; font-weight: 700; font-size: 15px; z-index: 2; }
.ime .logo { position: absolute; left: -28px; top: -4px; width: 28px; height: 28px; }

.menu { flex: none; display: flex; align-items: center; gap: 11px; height: 27px; padding: 0 5px 1px 7px; white-space: nowrap; overflow: hidden; }
.pic { gap: 4px; margin-left: -2px; }
.pic .tri { margin-left: 3px; }
.cut { width: 6px; overflow: hidden; margin-left: -3px; }
.right { margin-left: auto; display: flex; align-items: center; gap: 6px; }
.right button { gap: 4px; margin-left: 2px; }
.tip { color: #7a7000; text-decoration: none; }

.toprow { flex: none; display: flex; height: 30px; align-items: flex-start; }
.tools :deep(.bar) { display: flex; align-items: center; height: 26px; box-sizing: border-box; padding: 0 2px 0 1px; background: linear-gradient(#fdfdfd, #f1f1f1); border-radius: 0 3px 3px 0; flex: none; }
.toprow .top0 { width: 150px; margin-right: 2px; }
.toprow .top1 { width: 602px; margin-right: 2px; }
.toprow .top2 { flex: 1; }
.tools :deep(.tool) { gap: 4px; height: 24px; border: 1px solid transparent; padding: 0 3px; margin-right: -1px; }
.tools :deep(.tool.menu .tri) { margin-left: -2px; }
.tools :deep(.tool.off) { color: #848484; }
.tools :deep(.tool.on) { background: #dfebf6; border-color: #2080d0; }
.tools :deep(.tool.lit), .tools :deep(.lit + .drop) { background: #fff; }
.tools :deep(.drop) { width: 12px; height: 24px; justify-content: center; }
.tools :deep(.more) { margin-left: auto; align-self: flex-start; font-size: 16px; line-height: 12px; }
.tools :deep(.sep) { width: 1px; height: 18px; margin: 0 1px 0 3px; background: #bdbdbd; }
.tools :deep(.grip) { width: 5px; height: 14px; background: repeating-linear-gradient(#b4b4b4 0 2px, transparent 2px 4px) 1px 0 / 2px 100% no-repeat; }
.tools :deep(.combo) { position: relative; margin-right: 4px; background: #fff; height: 22px; }
.tools :deep(.combo.short) { width: 57px; }
.tools :deep(.combo.long) { width: 68px; }
.tools :deep(.combo::after) { content: ""; position: absolute; right: 3px; top: 10px; border: 3px solid transparent; border-top-color: #000; border-bottom: 0; }
.tools :deep(select) { appearance: none; width: 100%; height: 22px; border: 0; background: none; font: inherit; color: #000; padding: 0 0 0 2px; }
.tools :deep(.num) { display: flex; align-items: center; gap: 2px; margin-right: 3px; color: #777; }
.tools :deep(.spin) { position: relative; width: 58px; height: 23px; display: flex; box-sizing: border-box; border: 1px solid #777; background: #f6f6f6; }
.tools :deep(.wide .spin) { width: 68px; }
.tools :deep(.spin input) { width: 100%; min-width: 0; border: 0; background: none; text-align: right; padding: 0 17px 0 0; font: inherit; font-size: 13px; color: inherit; }
.tools :deep(.arrows::before), .tools :deep(.arrows::after) { content: ""; position: absolute; right: 4px; border: 3px solid transparent; }
.tools :deep(.arrows::before) { top: 4px; border-bottom-color: #555; border-top: 0; }
.tools :deep(.arrows::after) { bottom: 4px; border-top-color: #555; border-bottom: 0; }
.tools :deep(.check) { display: flex; align-items: center; gap: 8px; margin: 0 3px 0 2px; }
.tools :deep(.check input) { appearance: none; box-sizing: border-box; width: 12px; height: 12px; margin: 0; border: 1px solid #999; background: #f6f6f6; }

.body { flex: 1; min-height: 0; display: flex; gap: 4px; padding-right: 1px; }
.nav { flex: none; width: 166px; display: flex; flex-direction: column; padding-bottom: 1px; font-family: "Liberation Serif", "Noto Sans CJK SC", sans-serif; }
.navhead { flex: none; display: flex; align-items: center; height: 16px; margin-bottom: 1px; background: #0054e3; color: #fff; gap: 2px; padding: 0 2px 0 1px; }
.navhead span { flex: 1; }
.section { flex: none; height: 22px; justify-content: center; border: 1px solid #a0a0a0; border-left-color: #d0d0d0; margin-right: 1px; background: #f0f0f0; box-shadow: inset 1px 1px #fff; }
.treetools { flex: none; display: flex; align-items: center; gap: 7px; height: 27px; padding-left: 7px; background: linear-gradient(#fdfdfd, #f0f0f0); }
.treebox { flex: 1; min-height: 0; display: flex; margin: 0 2px 1px; border: 1px solid #828790; background: #fff; overflow: hidden; padding-top: 1px; }
.tree { flex: 1; overflow: hidden; }
.branch { height: 16px; line-height: 16px; padding-left: 3px; gap: 4px; }
.leaf { height: 16px; padding-left: 40px; background:
  repeating-linear-gradient(#888 0 1px, transparent 1px 2px) 12px 0 / 1px 100% no-repeat,
  repeating-linear-gradient(#888 0 1px, transparent 1px 2px) 31px 0 / 1px 100% no-repeat,
  repeating-linear-gradient(90deg, #888 0 1px, transparent 1px 2px) 31px 8px / 10px 1px no-repeat; }
.leaf.last { background-size: 1px 100%, 1px 8px, 10px 1px; }
.leaf button { height: 16px; line-height: 16px; padding: 0 4px 0 2px; gap: 5px; }
.leaf .sel { background: #d9d9d9; }
.lat { font-family: "DejaVu Sans Mono", monospace; font-size: 10px; }
.scroll { flex: none; width: 15px; display: flex; flex-direction: column; align-items: center; background: #f0f0f0; margin-right: 2px; }
.track { flex: 1; width: 100%; display: flex; flex-direction: column; justify-content: flex-end; }
.thumb { height: 69%; margin-bottom: 54px; background: #cdcdcd; }

.work { flex: 1; min-width: 0; display: flex; flex-direction: column; }
.toolrows { flex: none; display: flex; flex-direction: column; gap: 2px; }
.toolrow { display: flex; gap: 3px; padding-left: 2px; }
.toolrows .toolrow:last-child .bar:last-child { width: 30px; }
.canvas { flex: 1; min-height: 0; width: 100%; background: #000; display: block; }
.mark { font: 700 15px "Liberation Mono", monospace; text-anchor: middle; }
.axis { font: 13px "Liberation Sans", sans-serif; text-anchor: middle; }
.snap { flex: none; height: 31px; box-sizing: border-box; padding-top: 2px; }

.status { flex: none; display: flex; gap: 2px; height: 22px; box-sizing: border-box; padding-top: 2px; font-family: "Liberation Serif", "Noto Sans CJK SC", sans-serif; }
.status > span { box-sizing: border-box; border: 1px solid #d0d0d0; background: #f6f6f6; padding-left: 1px; line-height: 17px; white-space: nowrap; overflow: hidden; }
.c1 { width: 148px; }
.c2 { width: 78px; }
.c3 { width: 98px; }
.c4 { width: 48px; }
.hint { flex: 1; }
.c5 { width: 70px; }

.taskbar { flex: none; display: flex; height: 40px; background: #010b0d; color: #fff; }
.start { width: 48px; justify-content: center; background: #000; }
.search { width: 344px; display: flex; align-items: center; background: #333; box-sizing: border-box; padding: 0 12px 0 9px; }
.ringo { width: 16px; height: 16px; border: 3px solid #f4f4f4; border-radius: 50%; flex: none; }
.search input { flex: 1; min-width: 0; border: 0; background: none; padding: 0 0 0 5px; font: 14px "Noto Sans", "Noto Sans CJK SC", sans-serif; color: #fff; }
.search input::placeholder { color: #999; opacity: 1; }
.search .icon { width: 18px; height: 18px; }
.app { width: 50px; box-sizing: border-box; justify-content: center; border-bottom: 2px solid transparent; }
.app .icon { width: 22px; height: 22px; }
.app.tight { width: 48px; }
.app.run { border-bottom-color: #76b9ed; }
.app.run .icon { width: 24px; height: 24px; }
.app.active { background: #33393c; }
.link { color: #fff; text-decoration: none; align-self: center; margin-left: 13px; }
.cpu, .clock { text-align: center; line-height: 17px; align-self: center; white-space: nowrap; }
.cpu { margin-left: 19px; }
.tray { margin-left: auto; display: flex; }
.tray button { width: 24px; justify-content: center; }
.tray .kb { width: 32px; }
.kb .icon { width: 24px; height: 24px; }
.tray .lang { font-size: 13px; }
.tray .sg { width: 34px; }
.clock { width: 72px; }
.tray .notice { width: 50px; position: relative; box-sizing: border-box; padding-right: 8px; }
.notice b { position: absolute; left: 17px; top: 18px; width: 20px; height: 16px; border-radius: 8px; background: #333; border: 1px solid #888; text-align: center; line-height: 16px; }
.edge { width: 3px; border-left: 1px solid #666; }
</style>
